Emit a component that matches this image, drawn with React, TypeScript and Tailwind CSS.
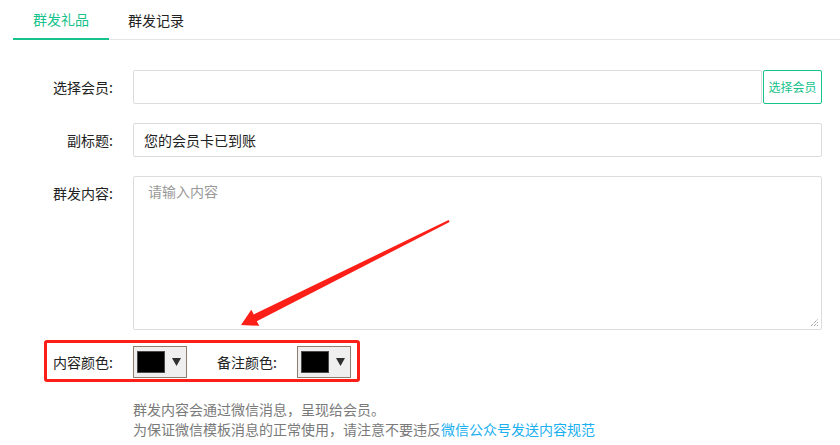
import React from "react";

const FONT = "font-['Microsoft_YaHei','Noto_Sans_CJK_SC','Noto_Sans',sans-serif]";

function FieldLabel({ children }: { children: React.ReactNode }) {
  return (
    <div className="w-[113px] shrink-0 text-right text-[14px] leading-[34px] text-[#222]">
      {children}
    </div>
  );
}

function ColorPicker() {
  return (
    <div className="flex h-[32px] w-[54px] items-center border border-[#8f7e6e] bg-[#efefef]">
      <div className="ml-[3px] h-[22px] w-[28px] border border-[#4a4a4a] bg-black" />
      <svg className="ml-[7px]" width="9" height="8" viewBox="0 0 9 8">
        <path d="M0 0 H9 L4.5 8 Z" fill="#2f2f2f" />
      </svg>
    </div>
  );
}

export default function App() {
  return (
    <div className={`relative h-[445px] w-[840px] overflow-hidden bg-white ${FONT}`}>
      {/* tabs */}
      <div className="ml-[13px] flex h-[40px] border-b border-[#e6e6e6]">
        <div className="-mb-px flex h-[40px] items-center border-b-2 border-[#17c28c] px-[20px] text-[14px] text-[#17c28c]">
          群发礼品
        </div>
        <div className="flex h-[40px] items-center px-[19px] text-[14px] text-[#222]">群发记录</div>
      </div>

      {/* form */}
      <div className="flex flex-col gap-[19px] pr-[18px] pt-[30px]">
        <div className="flex items-start">
          <FieldLabel>选择会员:</FieldLabel>
          <div className="ml-[20px] flex flex-1">
            <div className="h-[34px] flex-1 rounded-[2px] border border-[#dcdcdc]" />
            <button className="ml-px h-[34px] w-[59px] rounded-[2px] border border-[#17c28c] text-[12px] text-[#17c28c]">
              选择会员
            </button>
          </div>
        </div>

        <div className="flex items-start">
          <FieldLabel>副标题:</FieldLabel>
          <div className="ml-[20px] flex h-[34px] flex-1 items-center rounded-[2px] border border-[#dcdcdc] pl-[10px] text-[14px] text-[#222]">
            您的会员卡已到账
          </div>
        </div>

        <div className="flex items-start">
          <FieldLabel>群发内容:</FieldLabel>
          <div className="relative ml-[20px] h-[154px] flex-1 rounded-[2px] border border-[#dcdcdc] px-[14px] pt-[4px] text-[14px] leading-[20px] text-[#999]">
            请输入内容
            <svg className="absolute bottom-[2px] right-[2px]" width="9" height="9" viewBox="0 0 9 9">
              <path d="M1 8 L8 1 M4 8 L8 4 M7 8 L8 7" stroke="#777" strokeWidth="1" strokeDasharray="1 1" />
            </svg>
          </div>
        </div>
      </div>

      <div className="mt-[15px] flex items-center">
        <FieldLabel>内容颜色:</FieldLabel>
        <div className="ml-[20px]">
          <ColorPicker />
        </div>
        <div className="ml-[30px] text-[14px] leading-[34px] text-[#222]">备注颜色:</div>
        <div className="ml-[20px]">
          <ColorPicker />
        </div>
      </div>

      <div className="ml-[133px] mt-[20px] text-[14px] leading-[20px] text-[#7a7a7a]">
        <div>群发内容会通过微信消息，呈现给会员。</div>
        <div>
          为保证微信模板消息的正常使用，请注意不要违反
          <span className="text-[#1cb0f0]">微信公众号发送内容规范</span>
        </div>
      </div>

      {/* annotation overlay */}
      <div className="pointer-events-none absolute left-[44px] top-[340px] h-[42px] w-[316px] rounded-[3px] border-[3px] border-[#fb1f17]" />
      <svg className="pointer-events-none absolute left-0 top-0" width="840" height="445" viewBox="0 0 840 445">
        <polygon
          points="241,325 251.3,309.8 253.8,314.4 448.6,220 449.6,222 256.8,321.2 259.3,325.8"
          fill="#fb1f17"
        />
      </svg>
    </div>
  );
}
